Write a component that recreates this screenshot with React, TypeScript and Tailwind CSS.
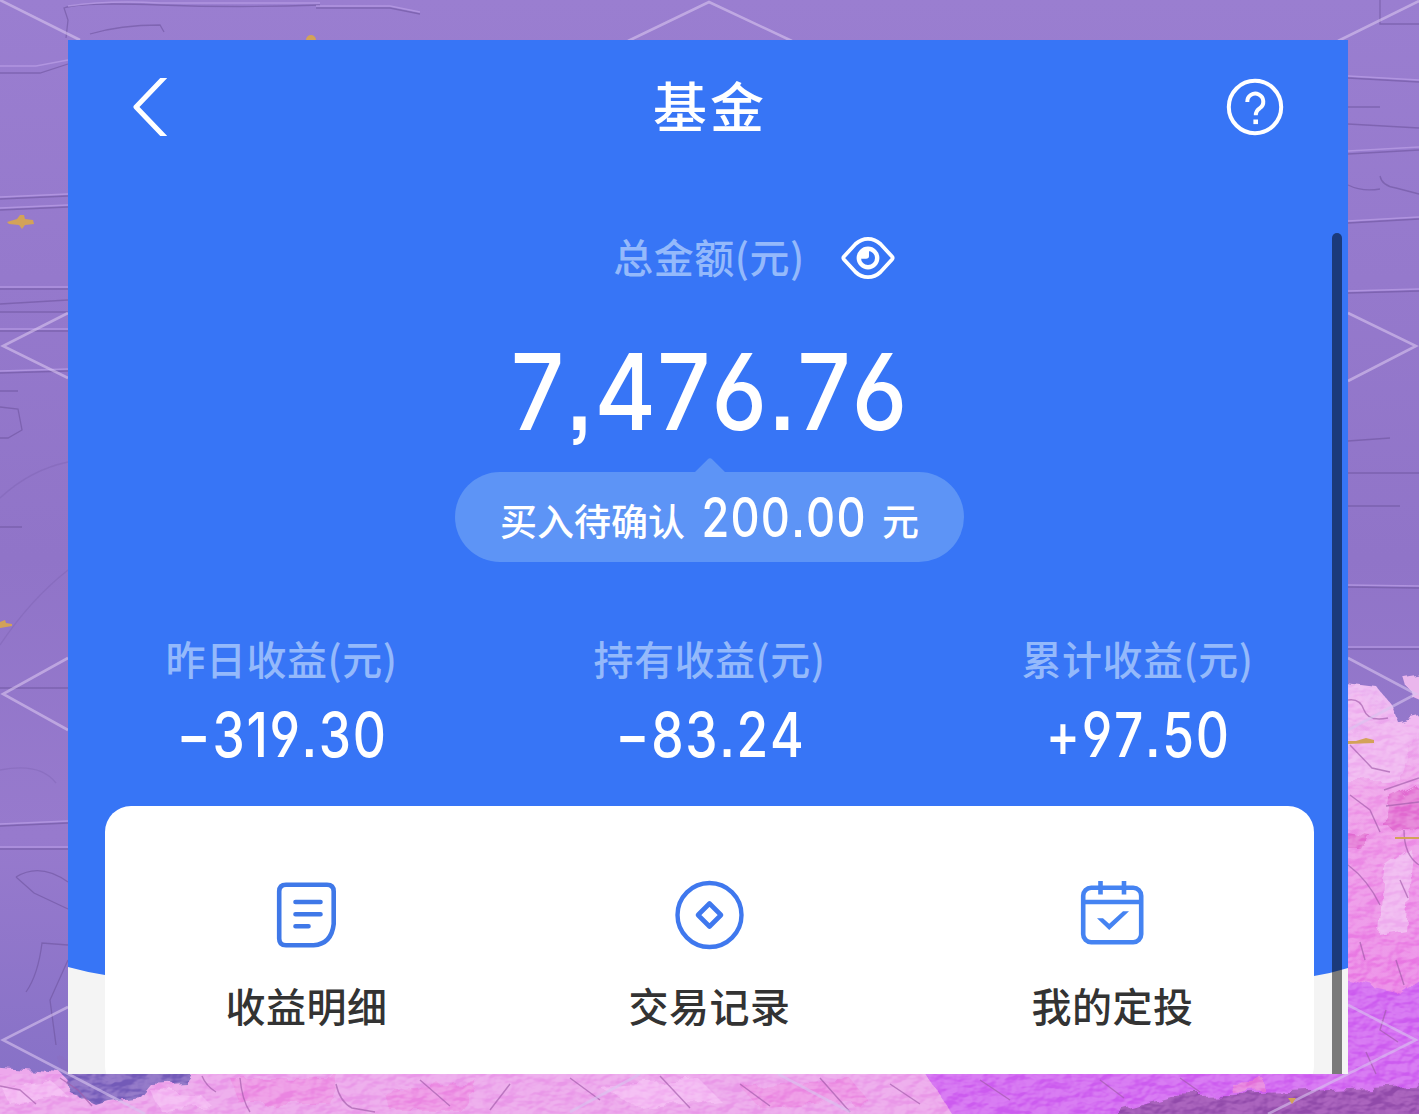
import { ReactNode } from "react";

const STATS = [
  { label: "昨日收益(元)", value: "−319.30" },
  { label: "持有收益(元)", value: "−83.24" },
  { label: "累计收益(元)", value: "+97.50" },
];

export default function App() {
  return (
    <div className="relative h-[1114px] w-[1419px] overflow-hidden bg-[#967acb] pl-[68px] pt-[40px] font-['Noto_Sans_CJK_SC',sans-serif]">
      <Wallpaper />
      <main className="relative h-[1034px] w-[1280px] overflow-hidden bg-[#f4f4f4]">
        <svg
          className="absolute inset-0"
          width="1280"
          height="1034"
          viewBox="0 0 1280 1034"
        >
          <path d="M0 0H1280V928Q1264 933 1246 936Q640 1050 37 935Q18 932 0 927Z" fill="#3775f6" />
        </svg>

        <div className="relative flex flex-col items-center pl-[3px]">
          <Header />

          <div className="mt-[54px] flex h-[60px] items-center gap-[36px] pl-[89px]">
            <Label>总金额(元)</Label>
            <EyeIcon />
          </div>

          <div className="mt-[44px] flex h-[120px] items-center justify-center">
            <Digits className="scale-x-[0.885] pl-[1px] text-[106px] tracking-[1px]">7,476.76</Digits>
          </div>

          <PendingPill />

          <div className="mt-[68px] flex w-[1284px] shrink-0">
            {STATS.map((stat) => (
              <div key={stat.label} className="flex w-[428px] flex-col items-center">
                <div className="flex h-[60px] items-center">
                  <Label>{stat.label}</Label>
                </div>
                <div className="mt-[15px] flex h-[60px] items-center">
                  <Digits className="scale-x-[0.83] pl-[2px] text-[62px] tracking-[2px]">{stat.value}</Digits>
                </div>
              </div>
            ))}
          </div>

          <div className="mt-[41px] grid h-[286px] w-[1209px] grid-cols-3 rounded-[26px] bg-white">
            <Action icon={<DetailIcon />} label="收益明细" />
            <Action icon={<RecordIcon />} label="交易记录" />
            <Action icon={<PlanIcon />} label="我的定投" />
          </div>
        </div>

        <div className="absolute right-[6px] top-[193px] h-[860px] w-[10px] rounded-full bg-black/50" />
      </main>
    </div>
  );
}

const Header = () => (
  <header className="flex h-[134px] w-full items-center pl-[62px] pr-[64px]">
    <div className="flex-1">
      <svg width="34" height="58" viewBox="0 0 34 58" fill="none">
        <path d="M35.500-5 3 29 35.500 63" stroke="#fff" strokeWidth="5" strokeLinejoin="round" />
      </svg>
    </div>
    <h1 className="pb-[4px] pl-[3px] text-[54px] font-medium leading-none tracking-[3px] text-white">基金</h1>
    <div className="flex flex-1 justify-end">
      <svg width="58" height="58" viewBox="0 0 58 58" fill="none" stroke="#fff">
        <circle cx="29" cy="29" r="26.2" strokeWidth="4" />
        <path d="M21.300 24A8 8 0 1 1 33.800 30.200Q29.800 32.800 29.800 37.300" strokeWidth="4" />
        <path d="M27.400 43.800h4.600" strokeWidth="4.600" />
      </svg>
    </div>
  </header>
);

const PendingPill = () => (
  <div className="relative mt-[20px] flex h-[90px] w-[509px] items-center justify-center rounded-full bg-[#5d94f6] text-white">
    <svg className="absolute -top-[14px] left-[240px]" width="30" height="14" viewBox="0 0 30 14">
      <path d="M0 14 12.6 1.4Q15-1 17.4 1.4L30 14Z" fill="#5d94f6" />
    </svg>
    <span className="pt-[6px] text-[37px] font-medium leading-none">买入待确认</span>
    <span className="mx-[17px] flex w-[163px] justify-center">
      <Digits className="scale-x-[0.82] pl-[1.5px] text-[55px] tracking-[1.5px]">200.00</Digits>
    </span>
    <span className="pt-[6px] text-[37px] font-medium leading-none">元</span>
  </div>
);

const Label = ({ children }: { children: ReactNode }) => (
  <span className="whitespace-nowrap pb-[4px] text-[40px] font-medium leading-none tracking-[0.5px] text-[#94b9fb]">
    {children}
  </span>
);

// cv03/cv04: open six and nine
const Digits = ({ className, children }: { className: string; children: ReactNode }) => (
  <span
    className={`inline-block whitespace-nowrap font-['Inter',sans-serif] font-[540] leading-none text-white [font-feature-settings:'cv03','cv04','ss07'] [font-kerning:none] ${className}`}
  >
    {children}
  </span>
);

const Action = ({ icon, label }: { icon: ReactNode; label: string }) => (
  <div className="flex flex-col items-center pt-[72px]">
    {icon}
    <span className="mt-[27px] text-[40px] font-medium leading-[56px] tracking-[0.5px] text-[#333]">
      {label}
    </span>
  </div>
);

const EyeIcon = () => (
  <svg width="54" height="44" viewBox="0 0 54 44" fill="none" stroke="#fff">
    <path
      d="M3 20.500 14.500 8Q20 2.800 27 2.800T39.500 8L51 20.500Q52.300 22 51 23.500L39.500 36Q34 41.200 27 41.200T14.500 36L3 23.500Q1.700 22 3 20.500Z"
      strokeWidth="3.800"
    />
    <circle cx="27" cy="22" r="9.200" strokeWidth="4.400" />
    <path d="M20 15H28V20Q28 22.800 25 22.800H20Z" fill="#fff" stroke="none" />
  </svg>
);

const DetailIcon = () => (
  <svg width="72" height="72" viewBox="0.5 0 72 72" fill="none" stroke="#3f78e8" strokeWidth="4.6">
    <path d="M15.500 6.700H56.500Q63.200 6.700 63.200 13.500V46Q61 66 43 67.300H15.500Q8.700 67.300 8.700 60.500V13.500Q8.700 6.700 15.500 6.700Z" />
    <path d="M25 24H50M25 36.300H50M25 48.300H38" strokeLinecap="round" />
  </svg>
);

const RecordIcon = () => (
  <svg width="72" height="72" viewBox="0.5 0 72 72" fill="none" stroke="#3f78ee" strokeLinejoin="round">
    <circle cx="36" cy="37" r="32" strokeWidth="4.400" />
    <path d="M36 25.500 47.500 37 36 48.500 24.500 37Z" strokeWidth="4.600" />
  </svg>
);

const PlanIcon = () => (
  <svg width="72" height="72" viewBox="0.5 0 72 72" fill="none" stroke="#4583f2" strokeWidth="4.6">
    <rect x="6.700" y="9.700" width="58" height="54.500" rx="8" />
    <path d="M6.700 24H64.700M24 3V16.500M47.500 3V16.500" />
    <path d="M20.500 40.200H26.500L32.700 45.800 46.500 33.200H52.500L32.700 52Z" fill="#4583f2" stroke="none" />
  </svg>
);

// painted backdrop: purple sky, pink foliage, thin diamond lattice
const Wallpaper = () => (
  <svg className="absolute inset-0" width="1419" height="1114" viewBox="0 0 1419 1114" fill="none">
    <defs>
      <linearGradient id="sky" x1="0" y1="0" x2="0" y2="1">
        <stop offset="0" stopColor="#9a7ed0" />
        <stop offset="0.5" stopColor="#9074c8" />
        <stop offset="0.75" stopColor="#977acd" />
        <stop offset="1" stopColor="#8570c6" />
      </linearGradient>
      <linearGradient id="leaf" x1="0" y1="680" x2="0" y2="990" gradientUnits="userSpaceOnUse">
        <stop offset="0" stopColor="#eebef3" />
        <stop offset="0.4" stopColor="#f0a4ea" />
        <stop offset="1" stopColor="#ec8ae7" />
      </linearGradient>
      <filter id="rough" x="-5%" y="-5%" width="110%" height="110%">
        <feTurbulence type="fractalNoise" baseFrequency="0.045" numOctaves="3" seed="8" />
        <feDisplacementMap in="SourceGraphic" scale="16" />
      </filter>
      <filter id="relief" x="0" y="0" width="100%" height="100%" colorInterpolationFilters="sRGB">
        <feTurbulence type="fractalNoise" baseFrequency="0.05 0.08" numOctaves="3" seed="4" result="n" />
        <feDiffuseLighting in="n" surfaceScale="9" diffuseConstant="0.75" lightingColor="#fff" result="l">
          <feDistantLight azimuth="235" elevation="45" />
        </feDiffuseLighting>
        <feComposite in="l" in2="SourceAlpha" operator="in" />
      </filter>
    </defs>
    <rect width="1419" height="1114" fill="url(#sky)" />

    <g stroke="#6f559f" strokeWidth="1.300" opacity="0.6">
      <path d="M66 38 68 20 64 8Q80 2 160 5T320 5M90 34Q120 25 160 25L164 32M316 8 390 8 420 14M0 73H40L68 64M0 199 68 196M0 210 68 207" />
      <path d="M0 289H68M0 304 68 300M0 312H68M0 331H68M0 373 68 371M0 391H18M0 407 18 409 22 430 8 438H0M0 527H22M0 688H68M0 826 68 823M0 849H68" />
      <path d="M16 877Q40 862 68 882M16 877 34 893 68 909M68 945 42 943Q38 975 26 992M68 960 50 1000 56 1045" />
      <path d="M0 498Q30 470 68 462M0 645Q30 600 68 570M0 770Q40 762 56 783" opacity="0.4" />
      <path d="M1348 78 1419 82M1348 107H1380M1348 124 1419 128M1348 154 1419 150M1348 185Q1362 192 1380 189M1380 176Q1382 186 1396 188L1419 194M1348 223 1419 219M1348 293 1419 291M1348 441 1390 438M1348 473H1419M1348 506H1400M1348 587 1419 588M1348 649H1419M1380 0V24H1419" />
    </g>
    <g stroke="#b79be4" strokeWidth="1.300" opacity="0.8">
      <path d="M68 6Q110 0 160 3H320M316 6 390 6 420 12M0 66H36L68 60M0 197 68 194M0 208 68 205M0 287H68M0 329H68M0 371 68 369M0 824 68 821M0 847H68M1348 76 1419 80M1348 151 1419 147M1348 221 1419 217M1348 291 1419 289M1348 585 1419 586M1348 647H1419" />
    </g>

    <g filter="url(#rough)">
      <path d="M1335 680 1375 685 1392 706 1398 722 1430 725V1125H1335Z" fill="url(#leaf)" />
      <path d="M1407 680 1430 676V705L1412 697Z" fill="#eab6ec" />
      <path d="M-10 1066 60 1072 75 1088 90 1100H105L112 1085 135 1082 150 1068H980L1000 1125H-10Z" fill="#eda8ec" />
      <path d="M60 1060H200L185 1082 150 1084 140 1096 108 1100 95 1104 70 1092Z" fill="#8a70c4" />
      <path d="M1335 978 1400 992 1430 970V1125H960L920 1065H1335Z" fill="#d572f2" />
      <path d="M1120 1110 1170 1096 1290 1092 1430 1085V1125H1120Z" fill="#a35cb8" />
      <path d="M1345 735 1425 716 1400 780H1345ZM1345 700 1360 694 1385 720 1350 725ZM1385 870 1412 850 1405 930 1380 935Z" fill="#f1b9f1" />
      <path d="M1390 800 1425 780V830L1386 828ZM1345 830 1370 835 1362 850H1345Z" fill="#e681d8" />
      <path d="M150 1090 200 1094 212 1106 160 1110ZM0 1085 50 1080 70 1098 10 1104ZM600 1088 700 1080 720 1100 640 1108Z" fill="#f4baf3" />
      <path d="M230 1078H340L330 1104H240ZM380 1090 480 1084 460 1110H390ZM740 1086 850 1078 870 1102 760 1108Z" fill="#ee99e6" />
      <path d="M1230 1082 1265 1080V1090L1232 1092Z" fill="#e887e0" />
    </g>
    <path
      d="M1348 684 1375 688 1390 708 1398 724 1419 725V1114H0V1074H1348Z"
      fill="#000"
      filter="url(#relief)"
      className="opacity-20 mix-blend-overlay"
    />
    <g stroke="#a05aa9" strokeWidth="1.400" opacity="0.65">
      <path d="M1348 700Q1360 698 1364 710T1388 718M1350 745 1372 768 1390 772M1350 795 1370 810 1380 832M1348 865Q1368 880 1380 905M1404 830Q1404 855 1419 865M1400 880 1408 898M1360 942 1365 960M1396 960 1404 985M1386 1010 1380 1030 1398 1042M1366 1052 1376 1074M1384 790 1419 778M1386 806 1419 802" />
      <path d="M0 1086 20 1090 36 1104M60 1078 78 1090 92 1106M202 1076Q206 1086 216 1092M240 1078Q242 1100 250 1112M336 1084Q340 1102 352 1108L375 1112M420 1080 450 1106M510 1084 490 1110M570 1078 600 1100M660 1076 690 1108M740 1084 770 1106M820 1078 850 1112M890 1084 920 1104M980 1080 1010 1100M1100 1080 1124 1098M1180 1078 1200 1092" />
    </g>

    <g stroke="#d9c4ef" strokeWidth="2.600" opacity="0.6">
      <path d="M0 0 80 40M628 41 709 2 792 41M1338 41 1419 1" />
      <path d="M68 313 3 346 68 378M68 658 3 694 68 730M68 1007 3 1040 145 1114M1348 313 1416 346 1348 381M1348 658 1416 694 1348 730M1348 1005 1416 1040 1268 1114M640 1074 570 1112M778 1074 850 1112" />
    </g>

    <g fill="#d3a258">
      <path d="M7 222 17 219 20 215 24 215 25 219 33 220 34 224 25 225 22 229 19 225 9 224Z" />
      <path d="M0 622 5 620 6 623 12 624V626L0 628ZM306 40A5 5 0 0 1 316 40Z" />
      <path d="M1348 741H1356L1366 738 1374 740V743L1348 744ZM1395 837H1419V839H1395ZM1288 1098 1296 1098 1292 1104Z" />
    </g>
  </svg>
);
